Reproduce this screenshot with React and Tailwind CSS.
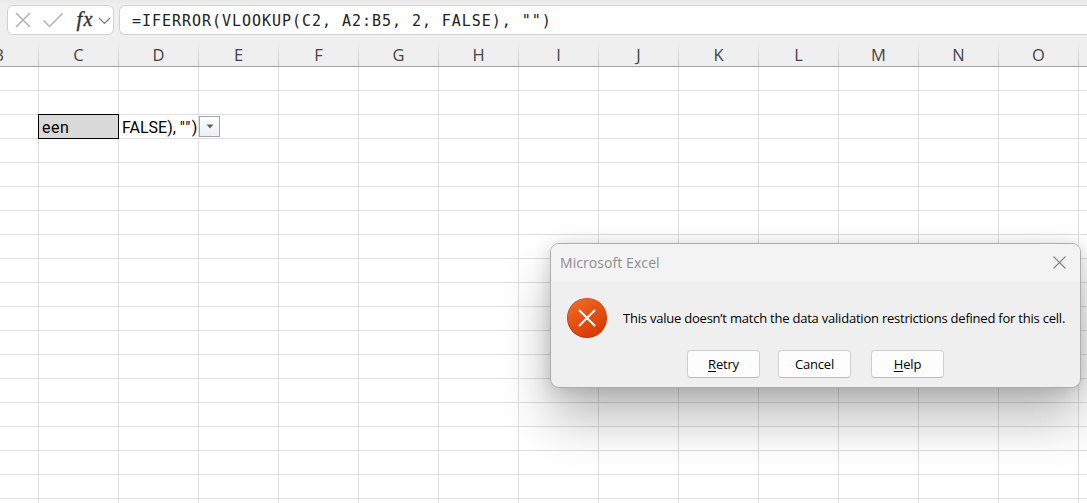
const columns = ['B', 'C', 'D', 'E', 'F', 'G', 'H', 'I', 'J', 'K', 'L', 'M', 'N', 'O', 'P'];
const rows = Array.from({ length: 19 }, (_, i) => i + 1);

// The first and last visible columns are clipped by the window edges.
const columnTemplate = 'grid grid-cols-[39px_repeat(13,80px)_8px]';

function FormulaBar() {
  return (
    <div className="flex h-[35px] pt-[5px] pl-[7px] bg-gradient-to-b from-[#e9e9e9] via-[#efefef] via-15% to-[#efefef]">
      <div className="h-[30px] w-[107px] shrink-0 rounded-md border border-[#d1d1d1] bg-white">
        <svg className="block" width="105" height="28" fill="none" stroke="#b1b1b1" strokeWidth="1.5">
          <path d="M8 7 L22 21 M22 7 L8 21" />
          <path d="M35.5 14.5 L41.5 20.5 L54.5 7.5" />
          <path d="M91 12 L96.500 17.500 L102 12" stroke="#777" strokeWidth="1.2" />
          <text x="68.500" y="19.500" fill="#333" stroke="#333" strokeWidth="0.4" fontSize="21" fontStyle="italic" fontFamily="'Liberation Serif', serif">f</text>
          <text x="75.500" y="19.500" fill="#333" stroke="#333" strokeWidth="0.4" fontSize="20" fontStyle="italic" fontFamily="'Liberation Serif', serif">x</text>
        </svg>
      </div>
      <div className="ml-[5px] flex h-[30px] flex-1 items-center rounded-l-md border border-r-0 border-[#d1d1d1] bg-white pt-0.5 pl-3 font-['DejaVu_Sans_Mono',monospace] text-[15px] tracking-[0.965px] whitespace-pre text-[#222]">
        {'=IFERROR(VLOOKUP(C2, A2:B5, 2, FALSE), "")'}
      </div>
    </div>
  );
}

function ColumnHeaders() {
  return (
    <div className={`${columnTemplate} h-8 border-b border-[#a3a3a3] bg-[#efefef] pt-2`}>
      {columns.map((name) => (
        <div key={name} className="relative flex h-[23px] items-center justify-center overflow-hidden pr-px font-['Open_Sans',sans-serif] text-[16.5px] text-[#444]">
          <span className={name === 'B' ? '-ml-[41px] pt-0.5' : name === 'P' ? 'hidden' : 'pt-0.5'}>{name}</span>
          <i className={name === 'P' ? 'hidden' : 'absolute top-0 right-0 h-full w-px bg-gradient-to-b from-[#efefef] to-[#c4c4c4]'} />
        </div>
      ))}
    </div>
  );
}

function Cell({ row, column }) {
  if (row === 3 && column === 'C') {
    return (
      <div className="relative z-10 -mt-px -ml-px flex h-[25px] w-[81px] items-center border border-black bg-[#d9d9d9] pt-0.5 pl-[3px] tracking-[0.5px] text-black">
        een
      </div>
    );
  }
  const edge = column === 'P' ? '' : 'border-r';
  if (row === 3 && column === 'D') {
    return (
      <div className={`${edge} flex h-6 items-center border-b border-[#dedede] pt-0.5 pl-[3px] whitespace-pre text-black`}>
        <span>{'FALSE), '}<span className="tracking-[1.2px]">{'""'}</span>{')'}</span>
      </div>
    );
  }
  if (row === 3 && column === 'E') {
    return (
      <div className={`${edge} h-6 border-b border-[#dedede]`}>
        <button className="mt-px flex h-[21px] w-[21px] items-center justify-center border border-[#a0a5b0] bg-gradient-to-b from-white to-[#edf0f5]">
          <svg width="8" height="5"><path d="M0.500 0.5 H7.500 L4 4.500 Z" fill="#606060" /></svg>
        </button>
      </div>
    );
  }
  return <div className={`${edge} h-6 border-b border-[#dedede]`} />;
}

function DialogButton({ hotkey, label, className }) {
  return (
    <button className={`${className} h-7 w-[73px] rounded-[4px] border border-[#d0d0d0] border-b-[#bcbcbc] bg-[#fdfdfd] text-[13px] leading-none tracking-[-0.2px] text-black`}>
      {hotkey && <span className="underline underline-offset-2">{hotkey}</span>}
      {label}
    </button>
  );
}

function ErrorDialog() {
  return (
    <div className="absolute top-[243px] left-[550px] z-20 h-[145px] w-[531px] overflow-visible rounded-[9px] border border-[#adadad] bg-[#efefef] font-['Open_Sans',sans-serif] shadow-[0_32px_50px_rgba(0,0,0,0.26),0_2px_18px_rgba(0,0,0,0.16)]">
      <div className="flex h-[37px] items-center justify-between rounded-t-[8px] bg-[#f3f3f3] pr-[14.5px] pl-[9px] text-[14px] tracking-[0.07px] text-[#8d8d8d]">
        <span>Microsoft Excel</span>
        <svg width="13" height="13" stroke="#858585" strokeWidth="1.1"><path d="M0.5 0.5 L12.500 12.500 M12.500 0.500 L0.500 12.500" /></svg>
      </div>
      <div className="flex items-center pt-[17px] pl-4">
        <svg className="shrink-0" width="40" height="40">
          <defs>
            <linearGradient id="alert" x1="0.2" y1="0" x2="0.8" y2="1">
              <stop offset="0" stopColor="#f06a28" />
              <stop offset="1" stopColor="#d63600" />
            </linearGradient>
          </defs>
          <circle cx="20" cy="20" r="20" fill="#bd3c0c" />
          <circle cx="20" cy="19.700" r="19.300" fill="url(#alert)" />
          <path d="M12.500 12.500 L27.500 27.500 M27.500 12.500 L12.500 27.500" stroke="#fff" strokeWidth="2" strokeLinecap="round" />
        </svg>
        <p className="ml-4 pt-0.5 text-[13px] tracking-[-0.22px] whitespace-nowrap text-black">
          This value doesn’t match the data validation restrictions defined for this cell.
        </p>
      </div>
      <div className="flex pt-3 pl-[136px]">
        <DialogButton hotkey="R" label="etry" />
        <DialogButton label="Cancel" className="ml-[18px]" />
        <DialogButton hotkey="H" label="elp" className="ml-5" />
      </div>
    </div>
  );
}

export default function App() {
  return (
    <div className="relative h-[503px] w-[1087px] overflow-hidden bg-white">
      <FormulaBar />
      <ColumnHeaders />
      <div className={`${columnTemplate} font-[Roboto,sans-serif] text-[16px]`}>
        {rows.map((row) => columns.map((column) => <Cell key={`${column}${row}`} row={row} column={column} />))}
      </div>
      <ErrorDialog />
    </div>
  );
}
